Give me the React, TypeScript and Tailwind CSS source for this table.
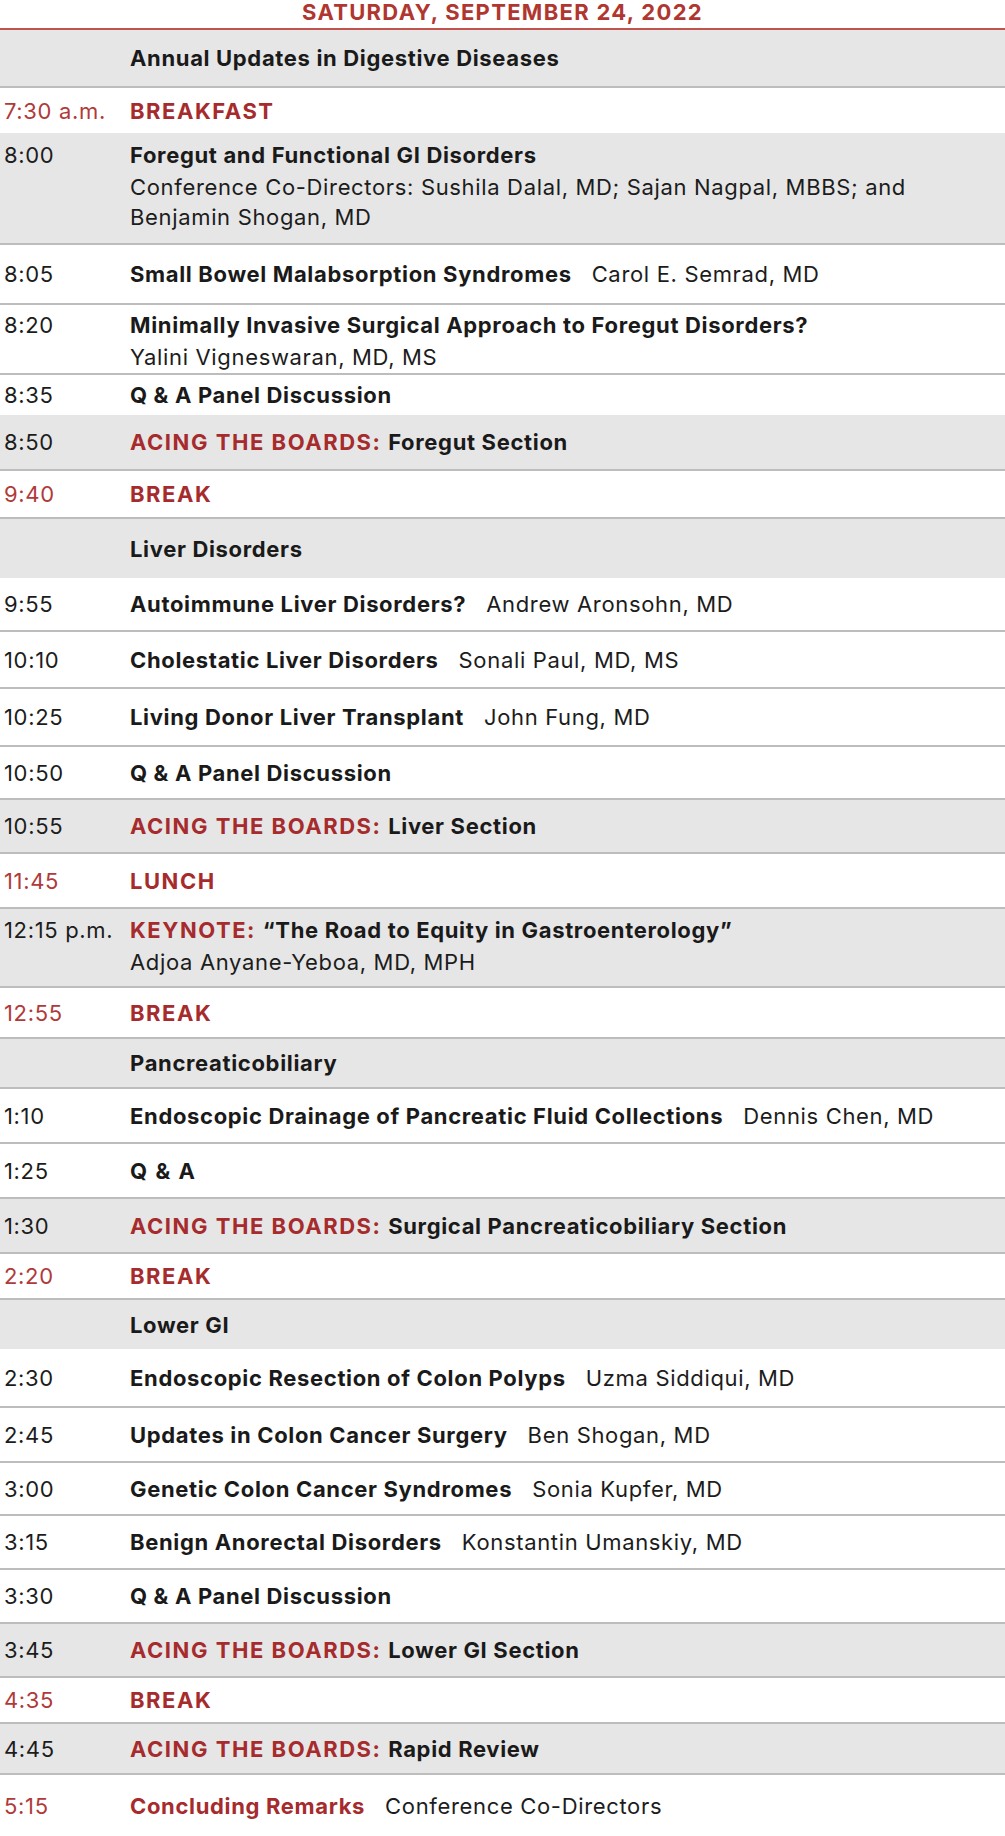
import React from 'react';

type Row = {
  time?: string;
  redTime?: boolean;
  lead?: string;
  title: string;
  redTitle?: boolean;
  speaker?: string;
  sub?: string[];
  gray?: boolean;
  line?: boolean;
  h: string;
  pt?: string;
};

const ROWS: Row[] = [
  { title: 'Annual Updates in Digestive Diseases', gray: true, line: true, h: 'h-[58px]' },
  { time: '7:30 a.m.', redTime: true, title: 'BREAKFAST', redTitle: true, h: 'h-[45px]' },
  {
    time: '8:00',
    title: 'Foregut and Functional GI Disorders',
    sub: ['Conference Co-Directors: Sushila Dalal, MD; Sajan Nagpal, MBBS; and', 'Benjamin Shogan, MD'],
    gray: true,
    line: true,
    h: 'h-[112px]',
    pt: 'pt-[7px]',
  },
  { time: '8:05', title: 'Small Bowel Malabsorption Syndromes', speaker: 'Carol E. Semrad, MD', line: true, h: 'h-[60px]' },
  {
    time: '8:20',
    title: 'Minimally Invasive Surgical Approach to Foregut Disorders?',
    sub: ['Yalini Vigneswaran, MD, MS'],
    line: true,
    h: 'h-[70px]',
    pt: 'pt-[5px]',
  },
  { time: '8:35', title: 'Q & A Panel Discussion', h: 'h-[40px]' },
  { time: '8:50', lead: 'ACING THE BOARDS:', title: 'Foregut Section', gray: true, line: true, h: 'h-[56px]' },
  { time: '9:40', redTime: true, title: 'BREAK', redTitle: true, line: true, h: 'h-[48px]' },
  { title: 'Liver Disorders', gray: true, h: 'h-[59px]' },
  { time: '9:55', title: 'Autoimmune Liver Disorders?', speaker: 'Andrew Aronsohn, MD', line: true, h: 'h-[54px]' },
  { time: '10:10', title: 'Cholestatic Liver Disorders', speaker: 'Sonali Paul, MD, MS', line: true, h: 'h-[57px]' },
  { time: '10:25', title: 'Living Donor Liver Transplant', speaker: 'John Fung, MD', line: true, h: 'h-[58px]' },
  { time: '10:50', title: 'Q & A Panel Discussion', line: true, h: 'h-[53px]' },
  { time: '10:55', lead: 'ACING THE BOARDS:', title: 'Liver Section', gray: true, line: true, h: 'h-[54px]' },
  { time: '11:45', redTime: true, title: 'LUNCH', redTitle: true, line: true, h: 'h-[55px]' },
  {
    time: '12:15 p.m.',
    lead: 'KEYNOTE:',
    title: '\u201CThe Road to Equity in Gastroenterology\u201D',
    sub: ['Adjoa Anyane-Yeboa, MD, MPH'],
    gray: true,
    line: true,
    h: 'h-[79px]',
    pt: 'pt-[6px]',
  },
  { time: '12:55', redTime: true, title: 'BREAK', redTitle: true, line: true, h: 'h-[51px]' },
  { title: 'Pancreaticobiliary', gray: true, line: true, h: 'h-[50px]' },
  { time: '1:10', title: 'Endoscopic Drainage of Pancreatic Fluid Collections', speaker: 'Dennis Chen, MD', line: true, h: 'h-[55px]' },
  { time: '1:25', title: 'Q & A', line: true, h: 'h-[55px]' },
  { time: '1:30', lead: 'ACING THE BOARDS:', title: 'Surgical Pancreaticobiliary Section', gray: true, line: true, h: 'h-[55px]' },
  { time: '2:20', redTime: true, title: 'BREAK', redTitle: true, line: true, h: 'h-[46px]' },
  { title: 'Lower GI', gray: true, h: 'h-[49px]' },
  { time: '2:30', title: 'Endoscopic Resection of Colon Polyps', speaker: 'Uzma Siddiqui, MD', line: true, h: 'h-[59px]' },
  { time: '2:45', title: 'Updates in Colon Cancer Surgery', speaker: 'Ben Shogan, MD', line: true, h: 'h-[55px]' },
  { time: '3:00', title: 'Genetic Colon Cancer Syndromes', speaker: 'Sonia Kupfer, MD', line: true, h: 'h-[53px]' },
  { time: '3:15', title: 'Benign Anorectal Disorders', speaker: 'Konstantin Umanskiy, MD', line: true, h: 'h-[54px]' },
  { time: '3:30', title: 'Q & A Panel Discussion', line: true, h: 'h-[54px]' },
  { time: '3:45', lead: 'ACING THE BOARDS:', title: 'Lower GI Section', gray: true, line: true, h: 'h-[54px]' },
  { time: '4:35', redTime: true, title: 'BREAK', redTitle: true, line: true, h: 'h-[46px]' },
  { time: '4:45', lead: 'ACING THE BOARDS:', title: 'Rapid Review', gray: true, line: true, h: 'h-[51px]' },
  { time: '5:15', redTime: true, title: 'Concluding Remarks', redTitle: true, speaker: 'Conference Co-Directors', h: 'h-[61px]' },
];

const ScheduleRow: React.FC<{ row: Row }> = ({ row }) => {
  const multi = !!row.sub;
  const caps = row.title === row.title.toUpperCase();
  return (
    <div
      className={`flex ${row.h} ${multi ? `items-start ${row.pt}` : 'items-center'} ${
        row.gray ? 'bg-[#e6e6e6]' : 'bg-white'
      } ${row.line ? 'border-b-2 border-[#bdbdbd]' : ''}`}
    >
      <div className={`w-[130px] shrink-0 pl-[4px] leading-[30px] ${row.redTime ? 'text-[#b03a3a]' : 'text-[#1c1c1c]'}`}>
        {row.time}
      </div>
      <div className="flex-1">
        <div className="leading-[30px] whitespace-nowrap">
          {row.lead && <span className="font-bold tracking-[0.07em] text-[#a62b2d]">{row.lead} </span>}
          <span
            className={`font-bold ${caps ? 'tracking-[0.07em]' : ''} ${row.redTitle ? 'text-[#a62b2d]' : 'text-[#1a1a1a]'}`}
          >
            {row.title}
          </span>
          {row.speaker && <span className="ml-[20px] text-[#1c1c1c]">{row.speaker}</span>}
        </div>
        {row.sub && (
          <div className="mt-[2px] leading-[30px] text-[#1c1c1c]">
            {row.sub.map((s) => (
              <div key={s} className="whitespace-nowrap">
                {s}
              </div>
            ))}
          </div>
        )}
      </div>
    </div>
  );
};

export default function App() {
  return (
    <div className="w-[1005px] h-[1836px] bg-white text-[22px] tracking-[0.03em] font-['Inter',sans-serif] overflow-hidden">
      <div className="h-[30px] border-b-2 border-[#c0534e] text-center font-bold text-[#b0372f] text-[22px] tracking-[0.06em] leading-[25px]">
        SATURDAY, SEPTEMBER 24, 2022
      </div>
      {ROWS.map((r, i) => (
        <ScheduleRow key={i} row={r} />
      ))}
    </div>
  );
}
